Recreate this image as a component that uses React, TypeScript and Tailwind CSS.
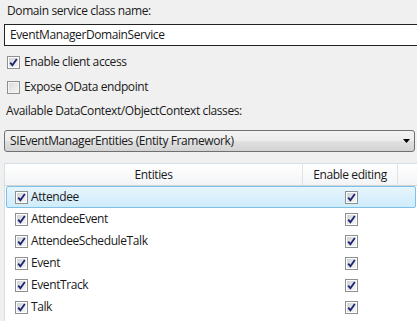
import React from "react";

function Check({ checked = true, disabled = false }: { checked?: boolean; disabled?: boolean }) {
  return (
    <div
      className={
        "w-[13px] h-[13px] border border-[#8e8f8f] p-[1px] shrink-0 " +
        (disabled ? "bg-[#f4f4f4]" : "bg-white")
      }
    >
      <div
        className={
          "w-full h-full relative " +
          (disabled
            ? "bg-[linear-gradient(135deg,#dcdcdc,#f2f2f2)]"
            : "bg-[linear-gradient(135deg,#cfd3d8,#f6f6f6)]")
        }
      >
        {checked && (
          <svg viewBox="0 0 9 9" className="absolute left-0 top-0 w-[9px] h-[9px]">
            <path d="M1.2 4.6 L3.4 7.2 L7.8 0.9" fill="none" stroke="#1c2470" strokeWidth="1.8" strokeLinejoin="miter" />
          </svg>
        )}
      </div>
    </div>
  );
}

const rows = ["Attendee", "AttendeeEvent", "AttendeeScheduleTalk", "Event", "EventTrack", "Talk"];

export default function App() {
  return (
    <div className="w-[417px] h-[321px] overflow-hidden bg-[#f0f0f0] text-[12px] leading-[16px] tracking-[-0.4px] text-[#1a1a1a] font-['Segoe_UI','Open_Sans',sans-serif]">
      <div className="pl-[7px] pt-[3px]">Domain service class name:</div>
      <div className="mt-[5px] ml-[4px] h-[22px] bg-white border-y border-l border-[#222] flex items-center pl-[5px]">
        EventManagerDomainService
      </div>
      <div className="mt-[9px] ml-[7px] flex items-center gap-[4px] h-[14px]">
        <Check />
        <span>Enable client access</span>
      </div>
      <div className="mt-[11px] ml-[7px] flex items-center gap-[4px] h-[14px]">
        <Check checked={false} disabled />
        <span>Expose OData endpoint</span>
      </div>
      <div className="mt-[9px] pl-[6px]">Available DataContext/ObjectContext classes:</div>
      <div className="mt-[11px] ml-[4px] mr-[2px] h-[22px] rounded-[3px] border border-[#707070] bg-[linear-gradient(#f3f3f3_0%,#ececec_50%,#e0e0e0_50%,#d3d3d3_100%)] flex items-center pl-[5px] pr-[4px]">
        <span className="flex-1">SIEventManagerEntities (Entity Framework)</span>
        <svg viewBox="0 0 7 4" className="w-[7px] h-[4px]">
          <path d="M0 0 L7 0 L3.5 4 Z" fill="#000" />
        </svg>
      </div>
      <div className="mt-[11px] ml-[4px] border-l border-t border-[#d5dfe5] bg-white h-[200px]">
        <div className="flex h-[22px] border-b border-[#d5d5d5] bg-[linear-gradient(#ffffff,#f3f4f6)]">
          <div className="w-[298px] flex items-center justify-center border-r border-[#e2e3e4]">Entities</div>
          <div className="w-[95px] flex items-center justify-center border-r border-[#e2e3e4]">Enable editing</div>
          <div className="flex-1" />
        </div>
        {rows.map((r, i) => (
          <div
            key={r}
            className={
              "flex h-[22px] items-center ml-[1px] mr-[1px] " +
              (i === 0
                ? "rounded-[2px] border border-[#7dc0ea] bg-[linear-gradient(#e6f5fd,#cfecfb)]"
                : "border border-transparent")
            }
          >
            <div className="w-[297px] flex items-center gap-[3px] pl-[8px]">
              <Check />
              <span>{r}</span>
            </div>
            <div className="w-[95px] flex items-center justify-center">
              <Check />
            </div>
          </div>
        ))}
      </div>
    </div>
  );
}
